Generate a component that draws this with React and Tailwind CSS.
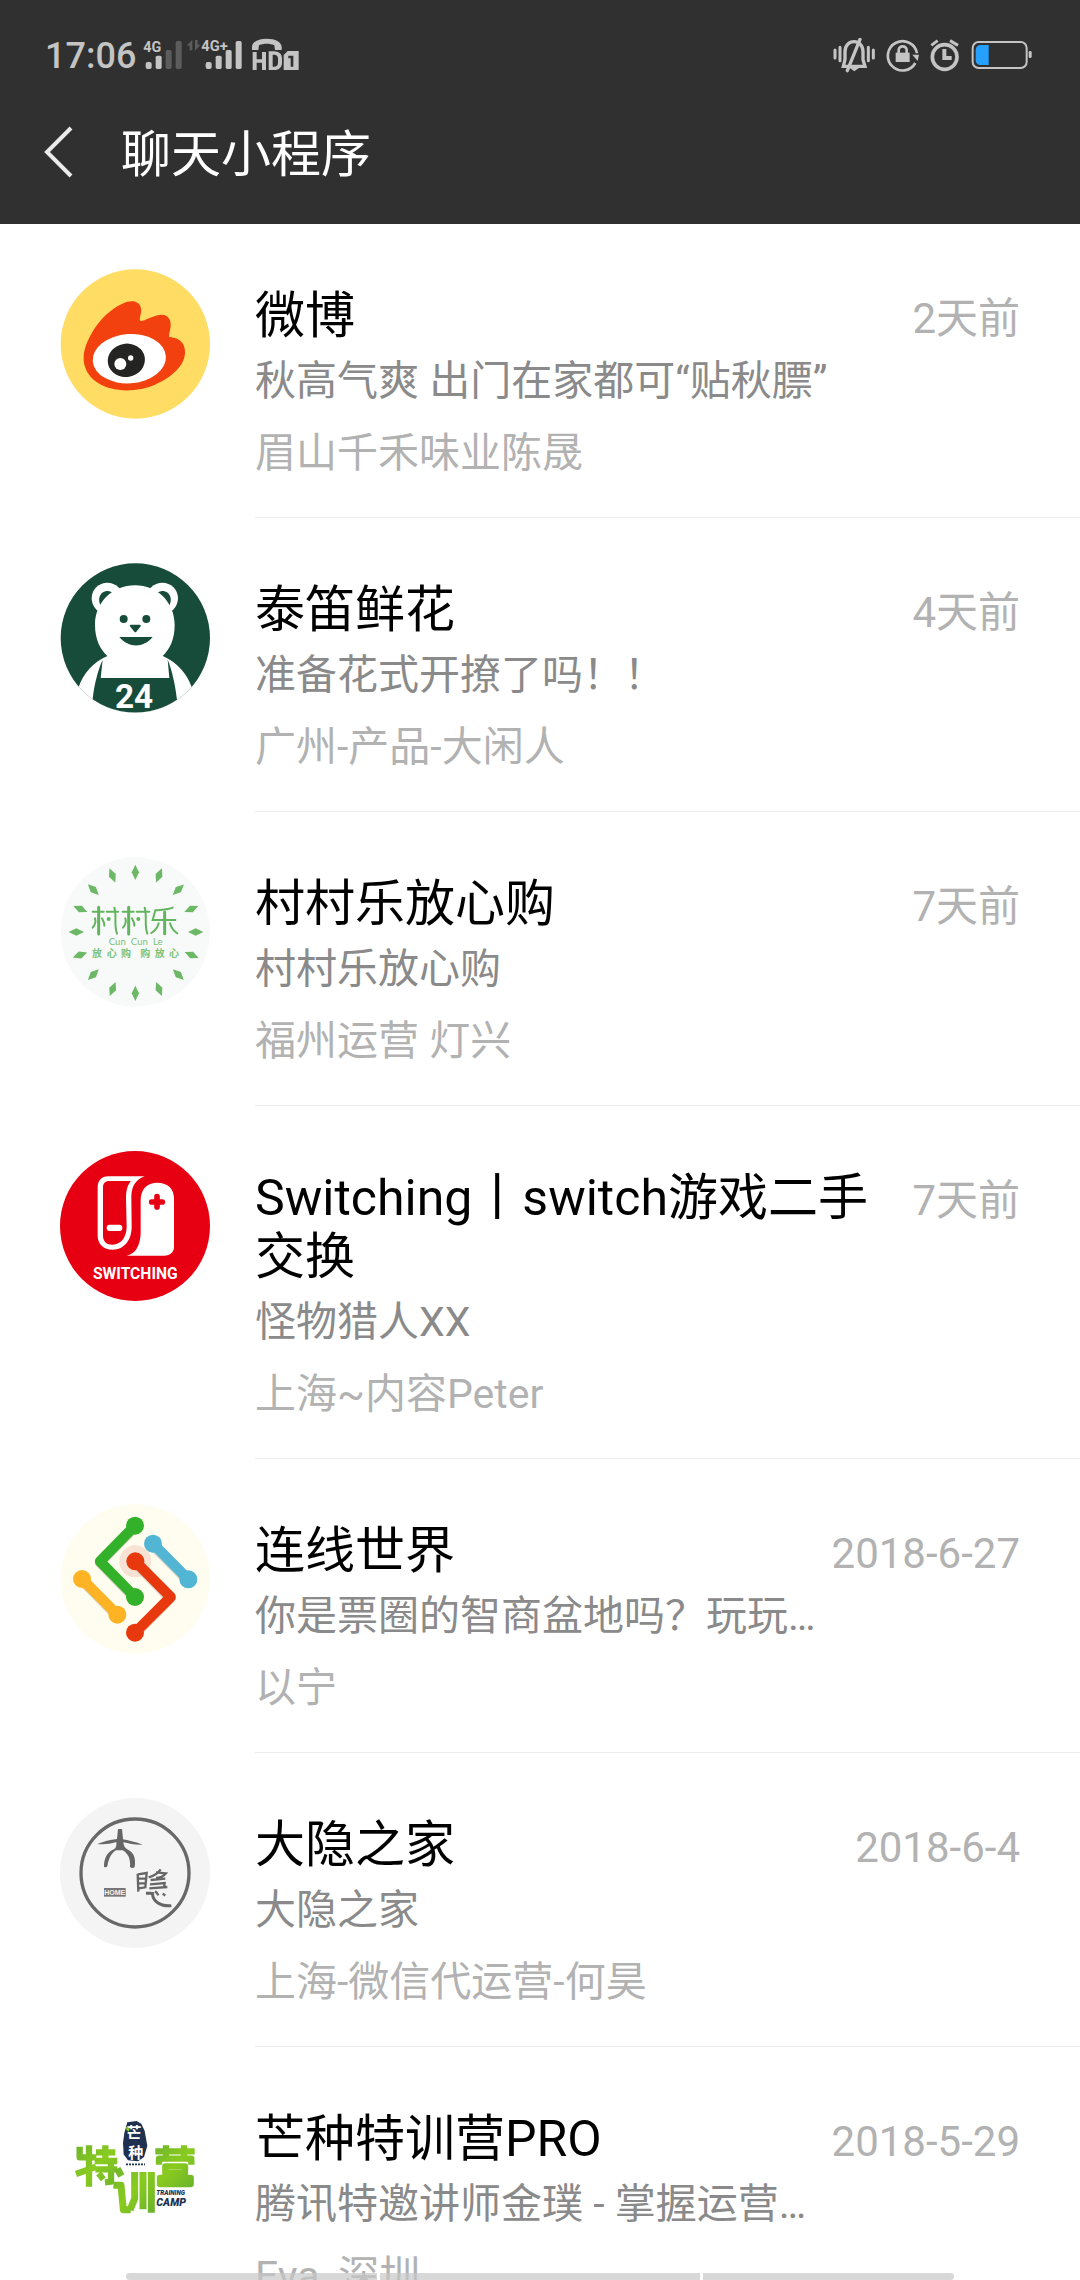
const textFont = "font-['Roboto','Noto_Sans_CJK_SC',sans-serif]";
const cjk = "'Noto Sans CJK SC', sans-serif";
const roboto = "Roboto, sans-serif";

/* ---------- Status bar ---------- */

const SignalIcons = () => (
  <svg className="w-[157px] h-9" viewBox="430 114 471 108" fill="#c4c4c4" aria-hidden="true">
    <text x="431" y="155" fontFamily={roboto} fontWeight="700" fontSize="43">4G</text>
    <rect x="438" y="186" width="18" height="21" rx="6" />
    <rect x="468" y="167" width="18" height="40" rx="5" />
    <rect x="498" y="150" width="18" height="57" rx="5" fill="#5c5c5c" />
    <rect x="528" y="123" width="18" height="84" rx="5" fill="#5c5c5c" />
    <path d="M561 137l17-18v32h-8v-14zM603 134l-17 18v-32h8v14z" fill="#5c5c5c" />
    <text x="605" y="153" fontFamily={roboto} fontWeight="700" fontSize="44">4G+</text>
    <rect x="618" y="186" width="18" height="21" rx="6" />
    <rect x="648" y="167" width="18" height="40" rx="5" />
    <rect x="678" y="150" width="18" height="57" rx="5" />
    <rect x="708" y="123" width="18" height="84" rx="5" />
    <path d="M757 150v-9c0-15 18-25 44-25s45 10 45 25v9h-20l-2-14c-14-6-32-6-46 0l-2 14z" />
    <path d="M759 156h12v22h16v-22h12v54h-12v-22h-16v22h-12z" />
    <path fillRule="evenodd" d="M807 154h16c16 0 24 9 24 22v12c0 13-8 22-24 22h-16zm12 10v36h4c8 0 12-4 12-12v-12c0-8-4-12-12-12z" />
    <path fillRule="evenodd" d="M864 153h33v57h-45v-45zm2 14v8h7v25h8v-33z" />
  </svg>
);

const SilentIcon = () => (
  <svg className="w-[42px] h-9" viewBox="160 114 126 108" fill="none" stroke="#c4c4c4" aria-hidden="true">
    <path d="M166 150v24M181 142v40M266 142v40M281 150v24" strokeWidth="9" strokeLinecap="round" />
    <path d="M191 199h65l-6-20v-24c0-18-12-30-27-30s-27 12-27 30v24z" strokeWidth="10" />
    <path d="M241 118l-38 94" strokeWidth="10" strokeLinecap="round" />
    <path d="M217 206h14l-7 5z" strokeWidth="5" />
  </svg>
);

const RotationLockIcon = () => (
  <svg className="w-[33px] h-9" viewBox="319 114 99 108" fill="none" stroke="#c4c4c4" aria-hidden="true">
    <path d="M412 160a44 44 0 1 0-5 29" strokeWidth="8" />
    <path d="M398 164h20l-4 19z" fill="#c4c4c4" stroke="none" />
    <rect x="348" y="158" width="42" height="28" fill="#c4c4c4" stroke="none" />
    <path d="M357 160v-9c0-16 24-16 24 0v9" strokeWidth="8" />
  </svg>
);

const AlarmIcon = () => (
  <svg className="w-[30px] h-9" viewBox="451 114 90 108" fill="none" stroke="#c4c4c4" aria-hidden="true">
    <circle cx="495" cy="171" r="37" strokeWidth="11" />
    <path d="M494 147v27h22" strokeWidth="12" />
    <path d="M455 136l19-14M535 136l-24-14" strokeWidth="9" />
  </svg>
);

const BatteryIcon = () => (
  <svg className="w-[62px] h-9" viewBox="574 114 186 108" aria-hidden="true">
    <rect x="579" y="126" width="162" height="78" rx="18" fill="none" stroke="#c4c4c4" strokeWidth="6" />
    <path d="M627 135v60h-23c-10 0-16-6-16-16v-28c0-10 6-16 16-16z" fill="#25a0ff" />
    <rect x="747" y="153" width="9" height="21" rx="4" fill="#c4c4c4" />
  </svg>
);

/* ---------- Avatars ---------- */

const WeiboLogo = () => (
  <svg className="size-full" viewBox="60 57 450 450">
    <circle cx="286" cy="282" r="224" fill="#ffdc64" />
    <path d="M131 320C133 280 165 225 200 193C230 165 262 151 281 154C301 158 307 175 302 193C300 204 297 212 303 213C315 213 335 197 363 194C386 193 396 212 391 236C388 250 385 258 389 261C425 264 436 285 435 310C433 350 390 385 345 404C305 421 255 427 212 415C160 401 129 365 131 320Z" fill="#f2410e" />
    <ellipse cx="268" cy="326" rx="110" ry="74" fill="#fff" transform="rotate(-4 268 326)" />
    <ellipse cx="259" cy="331" rx="56" ry="50" fill="#242422" transform="rotate(-10 259 331)" />
    <circle cx="241" cy="342" r="18" fill="#fff" />
    <circle cx="272" cy="324" r="8" fill="#fff" />
  </svg>
);

const BearLogo = () => (
  <svg className="size-full" viewBox="60 54 450 450">
    <defs>
      <clipPath id="bear-clip">
        <circle cx="286" cy="279" r="224" />
      </clipPath>
    </defs>
    <g clipPath="url(#bear-clip)">
      <rect x="60" y="54" width="450" height="450" fill="#184c3a" />
      <path d="M116 426C130 385 160 350 204 332H367C412 352 440 385 455 426L520 504H50Z" fill="#fff" />
      <circle cx="202" cy="160" r="47" fill="#fff" />
      <circle cx="367" cy="160" r="47" fill="#fff" />
      <path d="M184 186C170 162 180 141 199 138C208 137 215 140 221 145C203 155 190 168 184 186Z" fill="#184c3a" />
      <path d="M386 186C400 162 390 141 371 138C362 137 355 140 349 145C367 155 380 168 386 186Z" fill="#184c3a" />
      <path d="M285 121C352 121 404 172 404 240C404 285 388 315 367 334L355 380H215L203 334C182 315 165 285 165 240C165 172 218 121 285 121Z" fill="#fff" />
      <circle cx="251" cy="222" r="12" fill="#184c3a" />
      <circle cx="319" cy="222" r="12" fill="#184c3a" />
      <path d="M273 239h26c4 0 4 4 2 6l-12 15c-2 2-4 2-6 0l-12-15c-2-2-2-6 2-6z" fill="#184c3a" />
      <path d="M238 276h100c-28 34-72 34-100 0z" fill="#184c3a" />
      <path d="M188 344L182 399H388L383 344C396 375 406 420 411 464C340 515 230 515 158 464C162 420 174 375 188 344Z" fill="#184c3a" />
    </g>
    <text x="282" y="488" textAnchor="middle" fontFamily={roboto} fontWeight="700" fontSize="100" fill="#fff">24</text>
  </svg>
);

const leaves = [
  [286, 97, 0], [357, 106, 22], [415, 149, 47], [454, 207, 66], [467, 276, 90],
  [455, 345, 114], [415, 404, 135], [357, 447, 158], [286, 460, 180], [218, 447, 202],
  [160, 404, 225], [120, 345, 250], [109, 276, 270], [121, 207, 294], [160, 149, 315], [217, 106, 338],
];

const CunCunLeLogo = () => (
  <svg className="size-full" viewBox="60 51 450 450">
    <circle cx="286" cy="276" r="224" fill="#f8faf9" />
    {leaves.map(([x, y, angle]) => (
      <path key={angle} d="M0-23L11 0L0 23L-11 0Z" fill="#6cb866" transform={`translate(${x} ${y}) rotate(${angle})`} />
    ))}
    <g fill="none" stroke="#62b55e" strokeWidth="6" strokeLinecap="round">
      <path d="M158 215h33M165 235c4 12-2 22-7 28M186 235c4 8 8 14 7 22M200 215h34M223 203c8 26-2 50 8 78" />
      <path d="M248 215h33M256 235c4 12-2 22-7 28M276 235c4 8 8 14 7 22M290 215h38M314 203c8 26-2 50 8 78" />
      <path d="M398 203c-14 7-34 6-52 8l-8 29h68M356 250c-3 12-10 22-22 29M390 250c4 14 12 24 22 30" />
      <path d="M176 202v80M266 202v80M374 216v65" strokeWidth="9" />
    </g>
    <circle cx="206" cy="237" r="6" fill="#62b55e" />
    <circle cx="295" cy="237" r="6" fill="#62b55e" />
    <g fill="#7bc276" textAnchor="middle">
      <text x="287" y="315" fontFamily="Lato, sans-serif" fontSize="29">Cun&#160; Cun&#160; Le</text>
      {["放", "心", "购", "购", "放", "心"].map((char, i) => (
        <text key={i} x={[171, 215, 258, 316, 359, 402][i]} y="351" fontFamily={cjk} fontWeight="700" fontSize="30">{char}</text>
      ))}
    </g>
  </svg>
);

const SwitchingLogo = () => (
  <svg className="size-full" viewBox="60 48 450 450">
    <circle cx="285" cy="273" r="225" fill="#e70012" />
    <path fillRule="evenodd" d="M204 124H314C290 133 275 150 274 185L275 275C275 315 253 343 218 344C190 344 173 326 173 302V158C173 137 185 124 204 124ZM208 138C195 138 189 145 189 158V302C189 319 200 329 218 329C243 328 259 308 260 275L258 190C258 165 263 150 273 138Z" fill="#fff" />
    <rect x="200" y="269" width="47" height="19" rx="9" fill="#fff" />
    <path d="M260 362C286 357 300 332 302 296V196C302 162 322 143 352 143C384 143 402 162 402 190V336C402 352 390 362 373 362Z" fill="#fff" />
    <path d="M351 185v31M335 201h32" stroke="#e70012" strokeWidth="17" strokeLinecap="round" />
    <text x="286" y="431" textAnchor="middle" fontFamily={roboto} fontWeight="700" fontSize="47" fill="#fff">SWITCHING</text>
  </svg>
);

const LinkWorldLogo = () => (
  <svg className="size-full" viewBox="60 57 450 450" fill="none" strokeWidth="31" strokeLinejoin="round">
    <circle cx="286" cy="282" r="224" fill="#fffdf0" />
    <circle cx="286" cy="229" r="48" fill="#f8e2d3" />
    <path d="M285 126L180 233L285 340M126 286l106 107M338 180l106 107M285 233l106 107l-106 107" stroke="#b9b6a4" opacity="0.6" />
    <path d="M285 122L180 229L285 336" stroke="#34b12a" />
    <circle cx="285" cy="122" r="27" fill="#34b12a" />
    <circle cx="285" cy="336" r="27" fill="#34b12a" />
    <path d="M126 282l106 107" stroke="#feb324" />
    <circle cx="126" cy="282" r="27" fill="#feb324" />
    <circle cx="232" cy="389" r="27" fill="#feb324" />
    <path d="M339 176l106 107" stroke="#52b5d3" />
    <circle cx="339" cy="176" r="27" fill="#52b5d3" />
    <circle cx="445" cy="283" r="27" fill="#52b5d3" />
    <path d="M286 229l106 107l-107 107" stroke="#e8380e" />
    <circle cx="286" cy="229" r="27" fill="#e8380e" />
    <circle cx="285" cy="443" r="27" fill="#e8380e" />
  </svg>
);

const DaYinLogo = () => (
  <svg className="size-full" viewBox="60 54 450 450">
    <circle cx="285" cy="279" r="225" fill="#f4f4f4" />
    <circle cx="285" cy="279" r="162" fill="none" stroke="#686868" strokeWidth="10" />
    <path d="M234 147h12l3 31c20 4 38 8 59 16c-22 1-40-3-58-7c1 10 4 18 14 22c18 9 24 26 20 52c-4 4-10 3-14 0c2-24-5-40-22-50h-20c-16 10-23 28-26 48c-3 4-7 3-10 1c0-27 10-44 31-53c6-4 7-12 6-21c-20 6-38 8-57 6c20-8 38-12 59-15z" fill="#666" />
    <g fill="none" stroke="#666" strokeWidth="7">
      <path d="M293 281l2 54M294 283l26-4l-4 43l-20 3M296 296h21M296 310h20" />
      <path d="M362 268c-8 12-22 20-36 24M348 277l30 3c-8 10-18 14-30 14M332 300l44-4M330 313l44-4l-2 12M328 325l54-4" />
      <path d="M318 340h16M338 336c-4 26 22 44 56 41" strokeWidth="9" />
      <path d="M345 334c6 4 8 7 10 12M368 341l8 6" />
    </g>
    <rect x="192" y="324" width="65" height="26" fill="#777" />
    <text x="224" y="345" textAnchor="middle" fontFamily="'Liberation Sans', sans-serif" fontWeight="700" fontSize="21" fill="#f4f4f4">HOME</text>
  </svg>
);

const TrainingCampLogo = () => (
  <svg className="size-full" viewBox="60 36 450 450">
    <defs>
      <linearGradient id="camp-green" x1="0" y1="0" x2="1" y2="1">
        <stop offset="0" stopColor="#6fb52c" />
        <stop offset="0.5" stopColor="#8acb1f" />
        <stop offset="1" stopColor="#6cb42b" />
      </linearGradient>
    </defs>
    {/* 特 训 营 */}
    <g fill="none" stroke="url(#camp-green)" strokeWidth="19" strokeLinejoin="round">
      <path d="M119 200v32h50M147 196v124M108 282l60-22M168 217h58M196 196v46M164 243h68M166 268h66M213 243v62l-18 2M176 280l14 18" />
      <path d="M346 214h118M378 196v34M432 196v34M357 254v-18h97v18M376 259h59v20h-59zM360 294h92v18h-92z" />
    </g>
    <g fill="none" stroke="url(#camp-green)" strokeWidth="21" strokeLinejoin="round">
      <path d="M232 266l12 22M220 316h23l7 73h22M284 276v80l-14 34M309 276v112M334 276v122" />
    </g>
    <path d="M262 127l28-4l14 8l10 22l8 44l-10 34l-18 13l-30-3l-13-18l-2-34l4-30z" fill="#1f3150" />
    <g fill="#fff" textAnchor="middle" fontFamily={cjk} fontWeight="700" fontSize="45">
      <text x="282" y="174">芒</text>
      <text x="287" y="233">种</text>
    </g>
    <path d="M259 140l10 5l-2 10l-8-5z" fill="#8acb1f" />
    <path d="M258 253h57" stroke="#1f3150" strokeWidth="5" strokeDasharray="6 3" />
    <g fill="#1f3150" fontFamily={roboto} fontStyle="italic" fontWeight="900">
      <text x="349" y="346" fontSize="19">TRAINING</text>
      <text x="349" y="377" fontSize="32">CAMP</text>
    </g>
  </svg>
);

const programs = [
  { name: "微博", desc: "秋高气爽 出门在家都可“贴秋膘”", from: "眉山千禾味业陈晟", time: "2天前", Logo: WeiboLogo },
  { name: "泰笛鲜花", desc: "准备花式开撩了吗！！", from: "广州-产品-大闲人", time: "4天前", Logo: BearLogo },
  { name: "村村乐放心购", desc: "村村乐放心购", from: "福州运营 灯兴", time: "7天前", Logo: CunCunLeLogo },
  { name: "Switching丨switch游戏二手交换", desc: "怪物猎人XX", from: "上海~内容Peter", time: "7天前", Logo: SwitchingLogo },
  { name: "连线世界", desc: "你是票圈的智商盆地吗？玩玩…", from: "以宁", time: "2018-6-27", Logo: LinkWorldLogo },
  { name: "大隐之家", desc: "大隐之家", from: "上海-微信代运营-何昊", time: "2018-6-4", Logo: DaYinLogo },
  { name: "芒种特训营PRO", desc: "腾讯特邀讲师金璞 - 掌握运营…", from: "Eva_深圳", time: "2018-5-29", Logo: TrainingCampLogo },
];

const ProgramRow = ({ name, desc, from, time, Logo }) => (
  <li>
    <a href="#" className="flex pl-[60px]">
      <div className="size-[150px] shrink-0 mt-[45px]">
        <Logo />
      </div>
      <div className="flex-1 min-w-0 flex items-start ml-[45px] pt-[63px] pb-10 pr-[60px] border-b border-[#ededed]">
        <div className="flex-1 min-w-0">
          <h2 className="text-[50px] leading-[59px] text-black break-all">{name}</h2>
          <p className="mt-[11px] text-[41px] leading-[48px] text-[#8a8a8a] truncate">{desc}</p>
          <p className="mt-6 text-[41px] leading-[48px] text-[#b2b2b2] truncate">{from}</p>
        </div>
        <time className="shrink-0 ml-1 mt-2 text-[42px] leading-[48px] text-[#b2b2b2]">{time}</time>
      </div>
    </a>
  </li>
);

const App = () => (
  <div className={`relative h-screen flex flex-col overflow-hidden bg-white ${textFont}`} lang="zh-CN">
    <header className="shrink-0 bg-[#303030]">
      <div className="flex items-center h-20 pt-8 pl-[45px] pr-[47px]">
        <span className="text-[36px] leading-[48px] font-medium text-[#c4c4c4]">17:06</span>
        <div className="ml-[7px]">
          <SignalIcons />
        </div>
        <div className="ml-auto flex items-center gap-[11px]">
          <SilentIcon />
          <RotationLockIcon />
          <AlarmIcon />
          <BatteryIcon />
        </div>
      </div>
      <div className="flex items-center h-36 pl-10">
        <button type="button" aria-label="返回" className="w-9 h-[60px]">
          <svg className="w-9 h-[60px]" viewBox="0 0 36 60" fill="none" stroke="#ebebeb" strokeWidth="4">
            <path d="M31 6L7 30l24 24" />
          </svg>
        </button>
        <h1 className="ml-[45px] pt-[6px] text-[50px] leading-[60px] text-white">聊天小程序</h1>
      </div>
    </header>

    <main className="flex-1 min-h-0 overflow-hidden">
      <ul>
        {programs.map((program) => (
          <ProgramRow key={program.name} {...program} />
        ))}
      </ul>
    </main>

    {/* Gesture hint bars */}
    <div className="absolute bottom-0 inset-x-0 h-[7px] px-[126px] flex gap-[3px]" aria-hidden="true">
      <div className="flex-[11] bg-[#c8c8c8]/70 rounded-l" />
      <div className="flex-[14] bg-[#c8c8c8]/70" />
      <div className="flex-[11] bg-[#c8c8c8]/70 rounded-r" />
    </div>
  </div>
);

export default App;
